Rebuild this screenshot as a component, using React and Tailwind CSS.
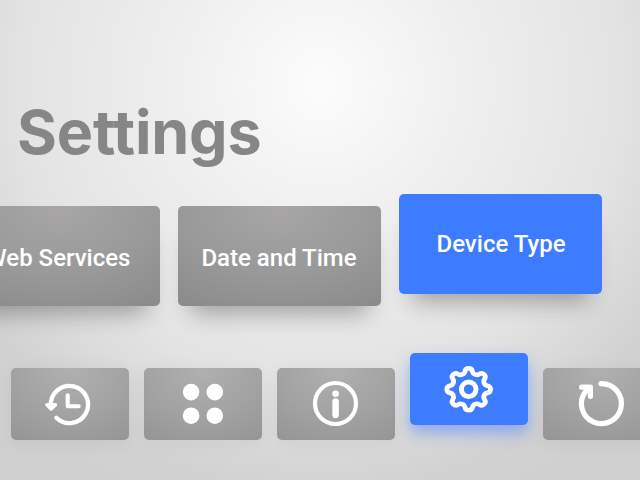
const HistoryIcon = () => (
  <svg className="size-full" viewBox="0 0 118 72" fill="none" stroke="white" strokeWidth="4.3" strokeLinecap="round" strokeLinejoin="round">
    <path d="M39.9 37.5A18.6 18.6 0 1 1 45.4 49.7" />
    <path d="M56.7 27.3V38.3H67.7" strokeWidth="4.1" />
    <path d="M36 36.8H44.4L40.2 41Z" fill="white" strokeWidth="3.6" />
  </svg>
);

const AppsIcon = () => (
  <svg className="size-full" viewBox="0 0 118 72" fill="white">
    <circle cx="47.1" cy="24.1" r="8.3" />
    <circle cx="70.8" cy="24.1" r="8.3" />
    <circle cx="47.1" cy="47.7" r="8.3" />
    <circle cx="70.8" cy="47.7" r="8.3" />
  </svg>
);

const InfoIcon = () => (
  <svg className="size-full" viewBox="0 0 118 72" fill="none" stroke="white">
    <circle cx="58.5" cy="35.5" r="20.5" strokeWidth="4.2" />
    <circle cx="58.6" cy="25.8" r="3.3" fill="white" stroke="none" />
    <path d="M58.6 33.4V47.1" strokeWidth="6.5" strokeLinecap="round" />
  </svg>
);

const GearIcon = () => (
  <svg className="size-full" viewBox="0 0 118 72" fill="none" stroke="white" strokeLinejoin="round">
    <g transform="translate(58.7 36.3)">
      <path
        transform="scale(1 0.96)"
        strokeWidth="4.8"
        d="M18.73-3.73A3.79 3.79 0 0 1 18.73 3.73A4.42 4.42 0 0 0 15.88 10.61A3.79 3.79 0 0 1 10.61 15.88A4.42 4.42 0 0 0 3.73 18.73A3.79 3.79 0 0 1-3.73 18.73A4.42 4.42 0 0 0-10.61 15.88A3.79 3.79 0 0 1-15.88 10.61A4.42 4.42 0 0 0-18.73 3.73A3.79 3.79 0 0 1-18.73-3.73A4.42 4.42 0 0 0-15.88-10.61A3.79 3.79 0 0 1-10.61-15.88A4.42 4.42 0 0 0-3.73-18.73A3.79 3.79 0 0 1 3.73-18.73A4.42 4.42 0 0 0 10.61-15.88A3.79 3.79 0 0 1 15.88-10.61A4.42 4.42 0 0 0 18.73-3.73Z"
      />
      <circle r="7.3" strokeWidth="4.9" />
    </g>
  </svg>
);

const RestartIcon = () => (
  <svg className="size-full" viewBox="0 0 118 72" fill="none" stroke="white" strokeWidth="5.2" strokeLinecap="round" strokeLinejoin="round">
    <path d="M58 15.6A20 20 0 1 1 42.5 23.5L46.5 20.5" />
    <path d="M38.6 19.2H47.4V28.3" strokeWidth="5.2" />
  </svg>
);

const cards = [
  { label: "Web Services" },
  { label: "Date and Time" },
  { label: "Device Type", active: true },
];

const tiles = [
  { name: "history", Icon: HistoryIcon },
  { name: "apps", Icon: AppsIcon },
  { name: "info", Icon: InfoIcon },
  { name: "settings", Icon: GearIcon, active: true },
  { name: "restart", Icon: RestartIcon },
];

export default function App() {
  return (
    <main className="h-[480px] w-[640px] overflow-hidden bg-[radial-gradient(circle_at_320px_84px,#fcfcfc_0px,#efefef_145px,#e3e3e3_300px,#d1d1d1_410px,#cfcfcf_500px)] font-['Roboto',sans-serif]">
      <h1 className="h-[206px] pt-[94px] pl-[17px] font-['Inter',sans-serif] text-[61px] leading-[76px] font-bold tracking-[-0.2px] text-[#868686]">
        Settings
      </h1>
      <section className="-ml-[43px] flex w-[683px] gap-[18px]">
        {cards.map(({ label, active }) => (
          <button
            key={label}
            className={`h-[100px] w-[203px] shrink-0 rounded-[5px] text-2xl font-medium text-white shadow-[0_20px_22px_-13px_rgba(0,0,0,0.32)] ${
              active
                ? "-mt-3 bg-[#3d7cff] pl-px"
                : "bg-[radial-gradient(100%_135%_at_50%_0%,#a8a6a6_0%,#999999_50%,#868686_100%)] pt-1 pr-px"
            }`}
          >
            {label}
          </button>
        ))}
      </section>
      <nav className="ml-[11px] flex w-[651px] gap-[15px] pt-[62px]">
        {tiles.map(({ name, Icon, active }) => (
          <button
            key={name}
            className={`h-[72px] w-[118px] shrink-0 rounded-[5px] ${
              active
                ? "-mt-[15px] bg-[#3d7cff] shadow-[0_8px_15px_rgba(61,124,255,0.5)]"
                : "bg-[radial-gradient(100%_135%_at_50%_0%,#b0b0b0_0%,#a2a2a2_50%,#919191_100%)] shadow-[0_3px_18px_rgba(0,0,0,0.05)]"
            }`}
          >
            <Icon />
          </button>
        ))}
      </nav>
    </main>
  );
}
